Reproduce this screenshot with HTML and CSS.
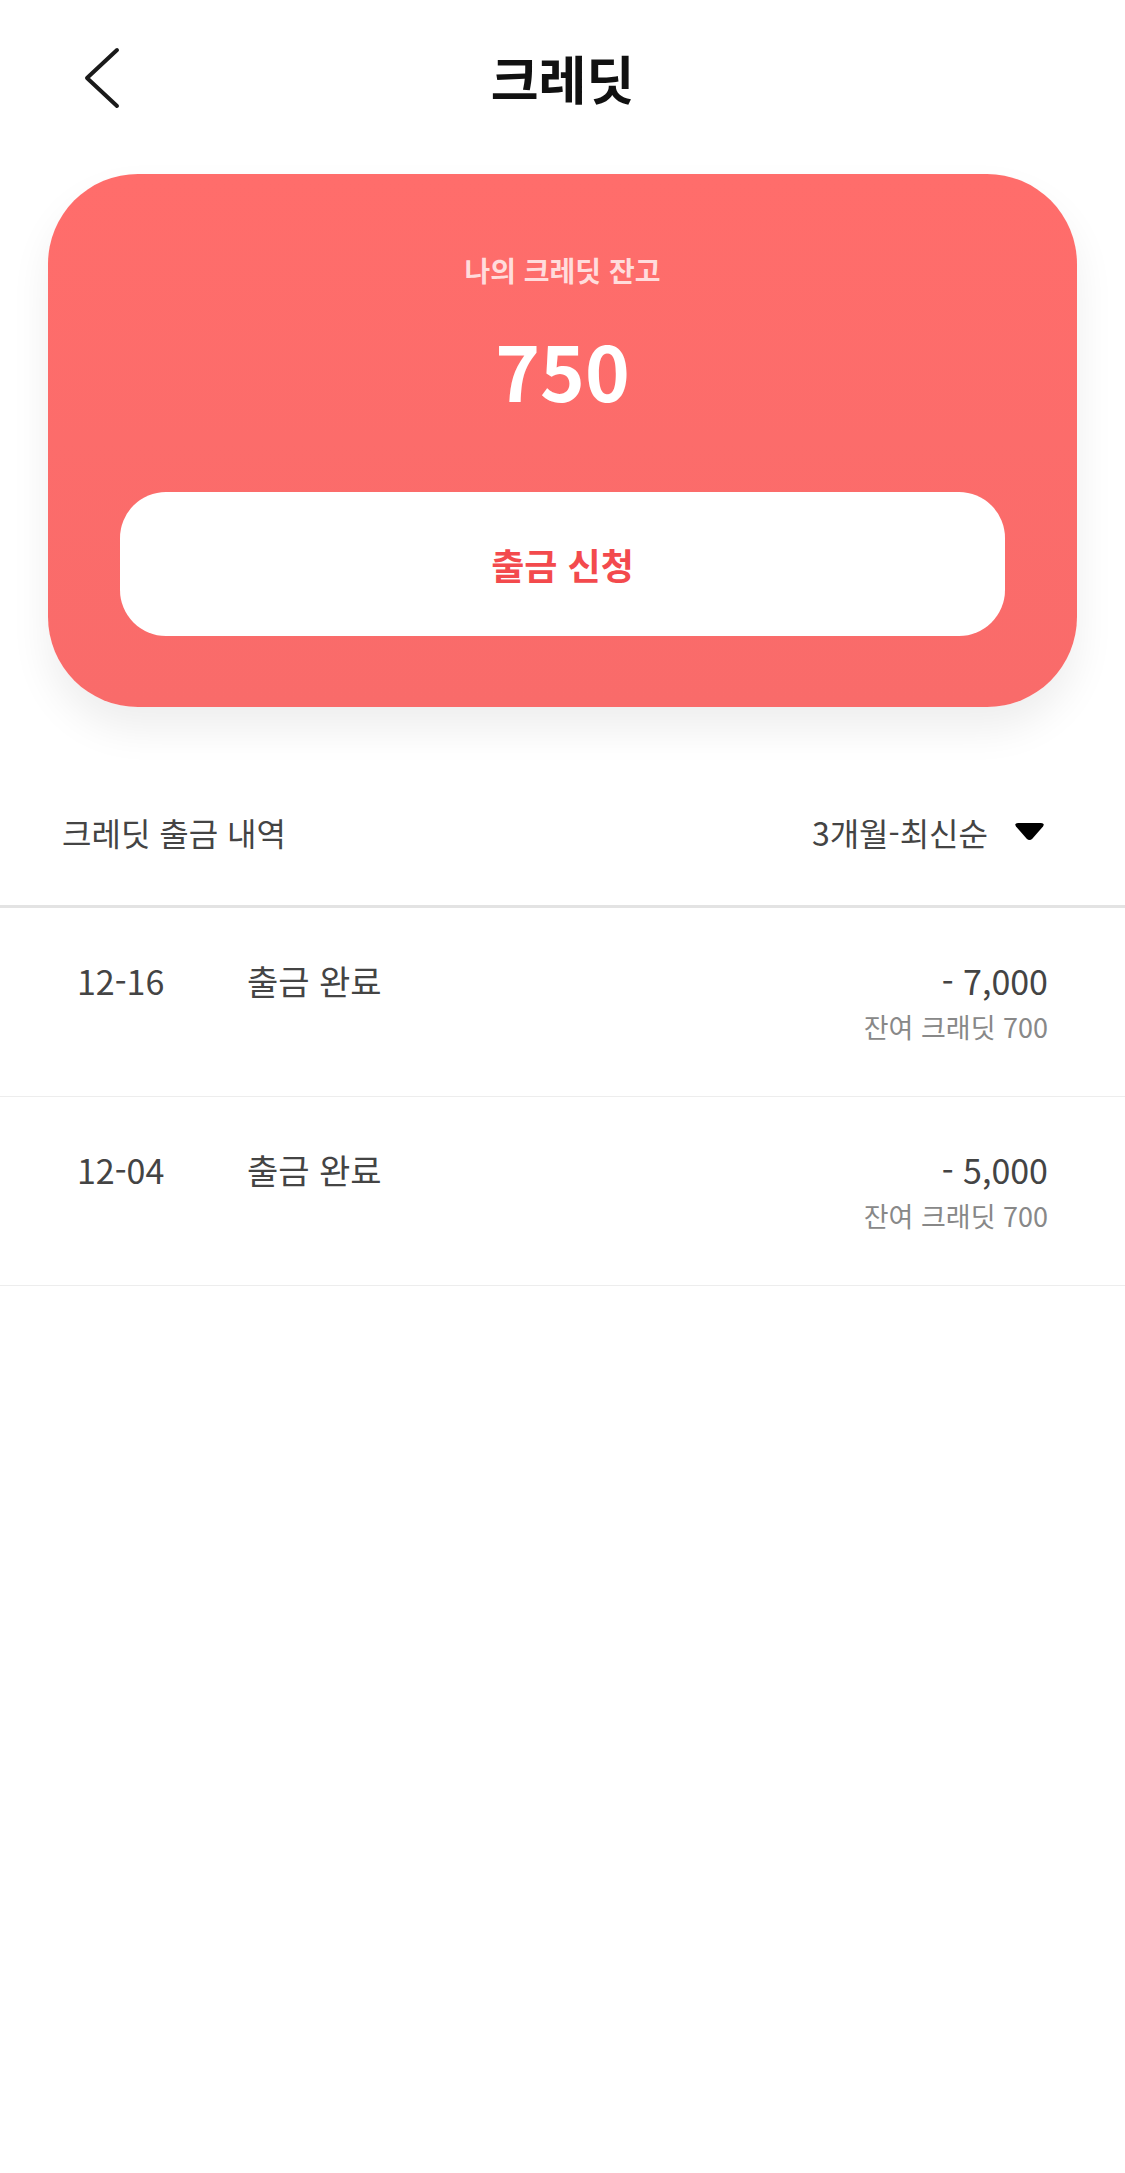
FILE: index.html
```html
<!DOCTYPE html>
<html lang="ko">
<head>
    <meta charset="UTF-8">
    <meta name="viewport" content="width=device-width, initial-scale=1.0">
    <title>크레딧</title>
    <link rel="stylesheet" href="styles.css">
</head>
<body>
    <div class="header">
        <button class="back" aria-label="뒤로">
            <svg width="36" height="62" viewBox="0 0 36 62">
                <path d="M33 3 L3 31 L33 59" fill="none" stroke="#1a1a1a" stroke-width="4" stroke-linecap="round" stroke-linejoin="round"/>
            </svg>
        </button>
        <h1>크레딧</h1>
        <div></div>
    </div>

    <div class="card">
        <p class="card-label">나의 크레딧 잔고</p>
        <p class="balance">750</p>
        <button class="withdraw">출금 신청</button>
    </div>

    <div class="list-head">
        <span>크레딧 출금 내역</span>
        <div class="filter">
            <span>3개월-최신순</span>
            <svg width="31" height="20" viewBox="0 0 31 20">
                <path d="M4 1 L27 1 Q31 1 29 4.5 L18.5 16.5 Q15.5 19.5 12.5 16.5 L2 4.5 Q0 1 4 1 Z" fill="#000"/>
            </svg>
        </div>
    </div>

    <ul class="history">
        <li class="row">
            <span class="date">12-16</span>
            <span class="status">출금 완료</span>
            <div class="amount">
                <span class="value">- 7,000</span>
                <span class="rest">잔여 크래딧 700</span>
            </div>
        </li>
        <li class="row">
            <span class="date">12-04</span>
            <span class="status">출금 완료</span>
            <div class="amount">
                <span class="value">- 5,000</span>
                <span class="rest">잔여 크래딧 700</span>
            </div>
        </li>
    </ul>
</body>
</html>
```

FILE: styles.css
```css
body {
    margin: 0;
    font-family: "Noto Sans CJK KR", "Noto Sans", sans-serif;
    background-color: #fff;
    color: #444;
}
.header {
    display: grid;
    grid-template-columns: 1fr auto 1fr;
    align-items: center;
    height: 156px;
}
.back {
    justify-self: start;
    margin-left: 84px;
    padding: 0;
    border: none;
    background: none;
    display: flex;
}
h1 {
    margin: 0;
    font-size: 52px;
    font-weight: 700;
    line-height: 60px;
    color: #111;
}
.card {
    margin: 18px 48px 0;
    padding: 76px 72px 71px;
    border-radius: 90px;
    background: linear-gradient(180deg, #ff6d6b 0%, #f96b6a 100%);
    box-shadow: 0 22px 40px rgba(0, 0, 0, 0.07);
    text-align: center;
}
.card-label {
    margin: 0;
    font-size: 28px;
    font-weight: 700;
    line-height: 40px;
    color: #ffdcdc;
}
.balance {
    margin: 36px 0 0;
    font-size: 76px;
    font-weight: 700;
    line-height: 86px;
    color: #fff;
}
.withdraw {
    display: block;
    width: 100%;
    height: 144px;
    margin-top: 80px;
    border: none;
    border-radius: 46px;
    background-color: #fff;
    font-family: inherit;
    font-size: 36px;
    font-weight: 700;
    color: #f34a4d;
}
.list-head {
    display: flex;
    align-items: center;
    justify-content: space-between;
    height: 138px;
    margin-top: 56px;
    padding: 0 80px 4px 62px;
    border-bottom: 3px solid #e3e3e3;
    font-size: 32px;
}
.filter {
    display: flex;
    align-items: center;
    gap: 26px;
}
.history {
    list-style: none;
    margin: 0;
    padding: 0;
}
.row {
    display: flex;
    align-items: flex-start;
    padding: 51px 77px 51px;
    border-bottom: 1px solid #ededed;
    font-size: 34px;
    line-height: 44px;
}
.date {
    width: 170px;
}
.status {
    flex: 1;
}
.amount {
    display: flex;
    flex-direction: column;
    align-items: flex-end;
}
.rest {
    margin-top: 6px;
    font-size: 27px;
    line-height: 36px;
    color: #888;
}
```
